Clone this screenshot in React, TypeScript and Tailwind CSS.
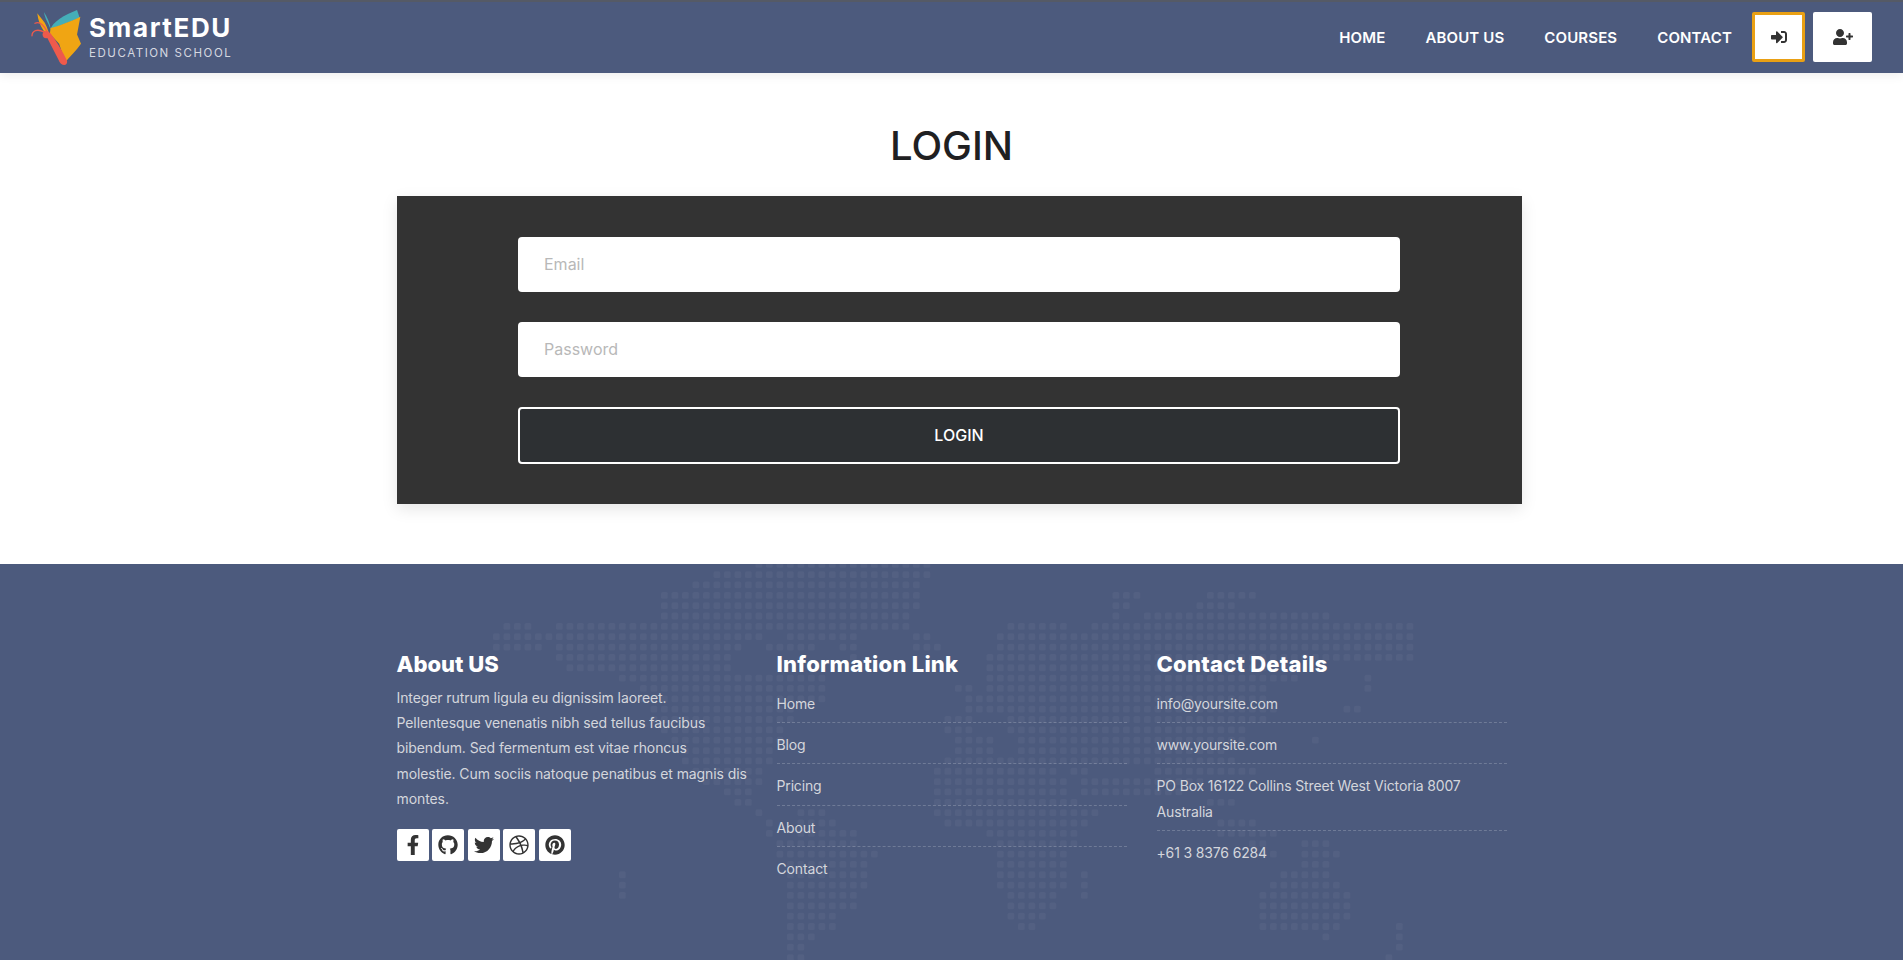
import React from "react";
import { FaSignInAlt, FaUserPlus, FaFacebookF, FaGithub, FaTwitter, FaDribbble, FaPinterest } from "react-icons/fa";

const MAP: [number, number[]][] = [
  [-1, [750, 933]],
  [0, [713, 928]],
  [1, [693, 918]],
  [2, [660, 918, 1107, 1140, 1200, 1253]],
  [3, [657, 918, 1110, 1127, 1190, 1237]],
  [4, [657, 910, 1110, 1125, 1137, 1333]],
  [5, [497, 530, 550, 910, 1010, 1067, 1093, 1410]],
  [6, [495, 762, 780, 860, 912, 930, 997, 1410]],
  [7, [495, 543, 557, 740, 760, 820, 837, 863, 913, 940, 990, 1410]],
  [8, [553, 737, 850, 860, 983, 1410]],
  [9, [560, 737, 980, 1300]],
  [10, [620, 823, 987, 1300, 1363, 1377]],
  [11, [633, 823, 957, 970, 987, 1270, 1363, 1370]],
  [12, [633, 823, 967, 1267]],
  [13, [645, 790, 963, 1277, 1340, 1360]],
  [14, [650, 790, 947, 970, 1010, 1263]],
  [15, [660, 780, 947, 970, 1010, 1247, 1263, 1270]],
  [16, [670, 780, 957, 997, 1020, 1247, 1307, 1320]],
  [17, [683, 770, 953, 997, 1013, 1230, 1297, 1303]],
  [18, [520, 526, 683, 770, 943, 1233]],
  [19, [690, 765, 930, 1057, 1070, 1093, 1157, 1253]],
  [20, [700, 765, 930, 1067, 1080, 1203]],
  [21, [720, 755, 930, 1067, 1083, 1187]],
  [22, [733, 757, 930, 1077, 1203, 1237]],
  [23, [753, 767, 800, 823, 933, 1097]],
  [24, [763, 773, 800, 840, 947, 970, 977, 1090, 1213, 1260]],
  [25, [767, 777, 800, 860, 987, 1080, 1213, 1280]],
  [26, [770, 863, 990, 1077, 1247, 1270, 1300, 1333]],
  [27, [773, 880, 1000, 1067, 1253, 1277, 1297, 1340]],
  [28, [780, 873, 1000, 1067, 1297, 1330]],
  [29, [620, 627, 780, 873, 997, 1067, 1083, 1093, 1280, 1333]],
  [30, [620, 627, 783, 870, 1000, 1063, 1075, 1088, 1263, 1340]],
  [31, [620, 627, 783, 863, 1003, 1057, 1083, 1088, 1253, 1347]],
  [32, [783, 853, 1008, 1053, 1253, 1353]],
  [33, [783, 842, 1008, 1045, 1253, 1350]],
  [34, [785, 832, 1013, 1033, 1260, 1337, 1393, 1407]],
  [35, [790, 820, 1317, 1333, 1397, 1407]],
  [36, [790, 810, 1393, 1407]],
  [37, [790, 805, 1383, 1397]],
];

function WorldDots() {
  const rects: React.ReactElement[] = [];
  for (const [i, ranges] of MAP) {
    const y = 574.7 + 10.35 * i - 564 - 3.5;
    for (let r = 0; r < ranges.length; r += 2) {
      const k0 = Math.ceil((ranges[r] - 3 - 808) / 10.5);
      const k1 = Math.floor((ranges[r + 1] - 3 - 808) / 10.5);
      for (let k = k0; k <= k1; k++) {
        rects.push(<rect key={`${i}-${r}-${k}`} x={808 + 10.5 * k} y={y} width={6.8} height={6.8} rx={1.5} />);
      }
    }
  }
  return (
    <svg className="absolute inset-0 h-full w-full" fill="#ffffff" fillOpacity={0.04} aria-hidden="true">
      {rects}
    </svg>
  );
}

function Logo() {
  return (
    <svg viewBox="30 20 160 185" className="h-[62px] w-[53px] shrink-0" aria-hidden="true">
      <path d="M52 38 C62 52 74 62 80 78 L88 100 L72 92 C60 74 54 58 52 38Z" fill="#f0a513" />
      <path d="M92 86 C96 66 135 42 172 28 L180 52 L98 84Z" fill="#45aeb8" />
      <path d="M72 34 C82 50 90 66 93 88 L86 72 C80 60 74 48 72 34Z" fill="#45aeb8" />
      <path d="M92 82 C116 76 150 64 182 48 L172 102 L184 130 C170 150 150 170 136 186 L118 130 L90 100Z" fill="#f0a513" />
      <path d="M80 108 L116 178 C122 198 144 200 142 182 C138 170 112 124 90 96Z" fill="#ee5a4c" />
      <circle cx="79" cy="102" r="11" fill="#ee5a4c" />
      <path d="M36 106 C36 90 52 84 72 94 M45 68 C58 62 72 74 82 94" fill="none" stroke="#ee5a4c" strokeWidth="4" strokeLinecap="round" />
    </svg>
  );
}

const links = ["Home", "Blog", "Pricing", "About", "Contact"];
const contacts = ["info@yoursite.com", "www.yoursite.com", "PO Box 16122 Collins Street West Victoria 8007 Australia", "+61 3 8376 6284"];
const socials = [FaFacebookF, FaGithub, FaTwitter, FaDribbble, FaPinterest];

function FooterList({ items }: { items: string[] }) {
  return (
    <ul className="mt-[14px] text-[14px] leading-[25.2px] tracking-[-0.15px] text-[#d4d6dc]">
      {items.map((t, i) => (
        <li key={t} className={i === items.length - 1 ? "" : "mb-[9px] border-b border-dashed border-white/20 pb-[6px]"}>
          {t}
        </li>
      ))}
    </ul>
  );
}

export default function App() {
  return (
    <div className="min-h-[960px] overflow-hidden bg-white font-['Inter','Liberation_Sans',sans-serif]">
      <header className="relative z-10 flex h-[73px] items-start justify-between border-t-2 border-[#555a66] bg-[#4c5a7d] pl-[30px] pr-[31px] shadow-[0_2px_10px_rgba(0,0,0,0.08)]">
        <div className="flex items-start">
          <div className="mt-[5px]"><Logo /></div>
          <div className="ml-[6px] w-[145px] text-white">
            <div className="mt-[9px] text-[26px] font-bold leading-[34px] tracking-[1.6px]">SmartEDU</div>
            <div className="mt-[1px] whitespace-nowrap text-[11.5px] leading-[14px] tracking-[1.55px] text-[#d5d8e0]">EDUCATION SCHOOL</div>
          </div>
        </div>
        <nav className="flex items-start">
          <ul className="mt-[25px] flex gap-[40px] text-[15px] font-semibold leading-[22px] tracking-[0.13px] text-white">
            <li>HOME</li>
            <li>ABOUT US</li>
            <li>COURSES</li>
            <li>CONTACT</li>
          </ul>
          <button className="ml-[20px] mt-[10px] flex h-[50px] w-[53px] items-center justify-center rounded-[2px] border-[3px] border-[#e9a014] bg-white text-[#333]">
            <FaSignInAlt size={16} />
          </button>
          <button className="ml-[8px] mt-[10px] flex h-[50px] w-[59px] items-center justify-center rounded-[2px] bg-white text-[#333]">
            <FaUserPlus size={20} />
          </button>
        </nav>
      </header>

      <main className="h-[491px]">
        <h1 className="pt-[49px] text-center text-[40px] font-medium leading-[48px] text-[#1f2022]">LOGIN</h1>
        <div className="mx-auto w-[1140px] pl-[15px]">
          <form className="mt-[26px] flex h-[308px] w-[1125px] flex-col items-center gap-[30px] bg-[#333333] pt-[41px] shadow-[0_5px_15px_rgba(0,0,0,0.1)]">
            <input placeholder="Email" className="h-[55px] w-[882px] rounded-[4px] bg-white px-[26px] pb-[1px] text-[16px] outline-none placeholder:text-[#b8b8b8]" />
            <input placeholder="Password" className="h-[55px] w-[882px] rounded-[4px] bg-white px-[26px] pb-[1px] text-[16px] outline-none placeholder:text-[#b8b8b8]" />
            <button type="button" className="h-[57px] w-[882px] rounded-[4px] border-2 border-white bg-[#2d3033] pb-[1px] text-[16px] font-medium text-white">LOGIN</button>
          </form>
        </div>
      </main>

      <footer className="relative h-[396px] overflow-hidden bg-[#4c5a7d]">
        <WorldDots />
        <div className="relative mx-auto grid w-[1140px] grid-cols-[380px_380px_350px] pl-[15px] pt-[87px]">
          <div className="w-[350px]">
            <h3 className="text-[22px] font-extrabold leading-[26px] text-white">About US</h3>
            <p className="mt-[8px] whitespace-nowrap text-[14px] leading-[25.2px] tracking-[-0.09px] text-[#d4d6dc]">
              Integer rutrum ligula eu dignissim laoreet.<br />
              Pellentesque venenatis nibh sed tellus faucibus<br />
              bibendum. Sed fermentum est vitae rhoncus<br />
              molestie. Cum sociis natoque penatibus et magnis dis<br />
              montes.
            </p>
            <div className="mt-[17.5px] flex gap-[3.5px]">
              {socials.map((Icon, i) => (
                <span key={i} className="flex h-[32px] w-[32px] items-center justify-center rounded-[2px] bg-white text-[#333]">
                  <Icon size={20} />
                </span>
              ))}
            </div>
          </div>
          <div>
            <h3 className="text-[22px] font-extrabold leading-[26px] tracking-[0.25px] text-white">Information Link</h3>
            <div className="w-[350px]"><FooterList items={links} /></div>
          </div>
          <div>
            <h3 className="text-[22px] font-extrabold leading-[26px] tracking-[0.25px] text-white">Contact Details</h3>
            <FooterList items={contacts} />
          </div>
        </div>
      </footer>
    </div>
  );
}
